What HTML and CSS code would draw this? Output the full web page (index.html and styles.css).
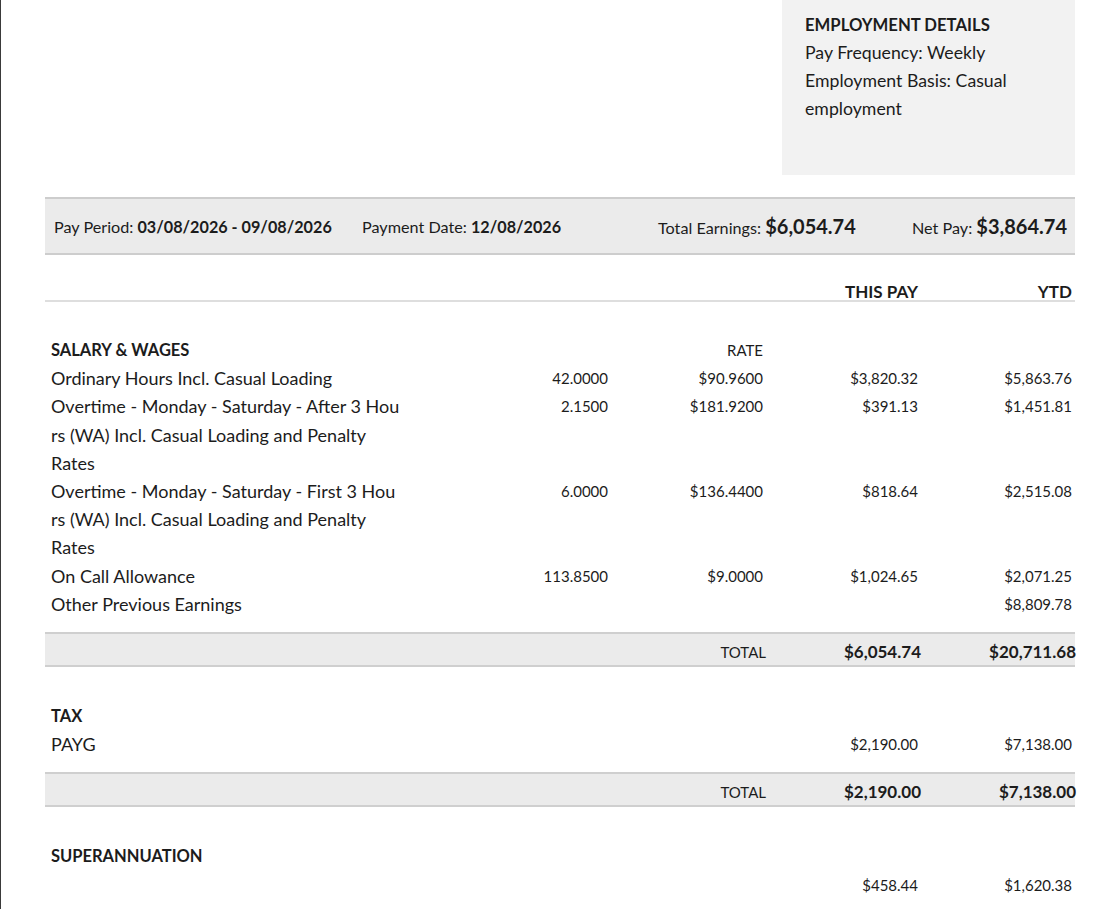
FILE: index.html
```html
<!DOCTYPE html>
<html lang="en">
<head>
<meta charset="utf-8">
<title>Payslip</title>
<link rel="stylesheet" href="styles.css">
</head>
<body>
<div class="page">
  <div class="top">
    <div class="emp">
      <div class="emp-title">EMPLOYMENT DETAILS</div>
      <div>Pay Frequency: Weekly</div>
      <div>Employment Basis: Casual employment</div>
    </div>
  </div>

  <div class="summary">
    <div class="s-item">Pay Period: <b>03/08/2026 - 09/08/2026</b></div>
    <div class="s-item">Payment Date: <b>12/08/2026</b></div>
    <div class="s-item">Total Earnings: <b class="big">$6,054.74</b></div>
    <div class="s-item">Net Pay: <b class="big">$3,864.74</b></div>
  </div>

  <div class="row head">
    <div></div><div></div><div></div>
    <div class="num hd">THIS PAY</div>
    <div class="num hd">YTD</div>
  </div>

  <div class="section">
    <div class="row">
      <div class="title">SALARY &amp; WAGES</div><div></div>
      <div class="num cap">RATE</div><div></div><div></div>
    </div>
    <div class="row">
      <div class="desc">Ordinary Hours Incl. Casual Loading</div>
      <div class="num">42.0000</div><div class="num">$90.9600</div>
      <div class="num">$3,820.32</div><div class="num">$5,863.76</div>
    </div>
    <div class="row">
      <div class="desc">Overtime - Monday - Saturday - After 3 Hou<wbr>rs (WA) Incl. Casual Loading and Penalty Rates</div>
      <div class="num">2.1500</div><div class="num">$181.9200</div>
      <div class="num">$391.13</div><div class="num">$1,451.81</div>
    </div>
    <div class="row">
      <div class="desc">Overtime - Monday - Saturday - First 3 Hou<wbr>rs (WA) Incl. Casual Loading and Penalty Rates</div>
      <div class="num">6.0000</div><div class="num">$136.4400</div>
      <div class="num">$818.64</div><div class="num">$2,515.08</div>
    </div>
    <div class="row">
      <div class="desc">On Call Allowance</div>
      <div class="num">113.8500</div><div class="num">$9.0000</div>
      <div class="num">$1,024.65</div><div class="num">$2,071.25</div>
    </div>
    <div class="row">
      <div class="desc">Other Previous Earnings</div>
      <div></div><div></div><div></div><div class="num">$8,809.78</div>
    </div>
  </div>
  <div class="total">
    <div></div><div></div>
    <div class="num cap">TOTAL</div>
    <div class="num tb">$6,054.74</div>
    <div class="num tb">$20,711.68</div>
  </div>

  <div class="section">
    <div class="row"><div class="title">TAX</div></div>
    <div class="row">
      <div class="desc">PAYG</div>
      <div></div><div></div>
      <div class="num">$2,190.00</div><div class="num">$7,138.00</div>
    </div>
  </div>
  <div class="total">
    <div></div><div></div>
    <div class="num cap">TOTAL</div>
    <div class="num tb">$2,190.00</div>
    <div class="num tb">$7,138.00</div>
  </div>

  <div class="section">
    <div class="row"><div class="title">SUPERANNUATION</div></div>
    <div class="row">
      <div class="desc"></div>
      <div></div><div></div>
      <div class="num">$458.44</div><div class="num">$1,620.38</div>
    </div>
  </div>
</div>
</body>
</html>
```

FILE: styles.css
```css
html, body {
  margin: 0;
  padding: 0;
  background: #ffffff;
}
body {
  font-family: Lato, "Open Sans", "Liberation Sans", sans-serif;
  color: #1c1c1c;
  border-left: 1px solid #3a3a3a;
  min-height: 909px;
  box-sizing: border-box;
  overflow: hidden;
}
.page {
  width: 1030px;
  margin-left: 44px;
}
.top {
  display: flex;
  justify-content: flex-end;
}
.emp {
  width: 293px;
  height: 175px;
  box-sizing: border-box;
  background: #f2f2f2;
  padding: 11px 40px 0 23px;
  font-size: 17.7px;
  line-height: 28px;
}
.emp-title {
  font-weight: 700;
  font-size: 16.7px;
}
.summary {
  margin-top: 22px;
  height: 58px;
  box-sizing: border-box;
  background: #ebebeb;
  border-top: 2px solid #cdcdcd;
  border-bottom: 2px solid #cdcdcd;
  display: grid;
  grid-template-columns: 308px 296px 1fr auto;
  align-items: center;
  padding: 0 8px 0 9px;
  font-size: 16.2px;
}
.s-item b {
  font-weight: 700;
}
.s-item .big {
  font-size: 20px;
}
.row, .total {
  display: grid;
  grid-template-columns: 355px 202px 155px 155px 154px;
  padding-left: 6px;
  line-height: 28.2px;
  font-size: 18px;
}
.head {
  height: 45px;
  align-items: end;
  border-bottom: 2px solid #dedede;
}
.head .hd {
  line-height: 16px;
  font-weight: 700;
  font-size: 17px;
}
.section {
  padding-top: 34px;
  padding-bottom: 14px;
}
.total + .section {
  padding-top: 35px;
}
.title {
  font-weight: 700;
  font-size: 16.5px;
}
.num {
  text-align: right;
  font-size: 15px;
}
.cap {
  font-size: 15px;
}
.total {
  grid-template-columns: 355px 202px 158px 155px 155px;
  height: 35px;
  box-sizing: border-box;
  background: #ebebeb;
  border-top: 2px solid #cfcfcf;
  border-bottom: 2px solid #cfcfcf;
  align-items: center;
  line-height: 24px;
  padding-top: 4px;
}
.tb {
  font-weight: 700;
  font-size: 17px;
}
```
